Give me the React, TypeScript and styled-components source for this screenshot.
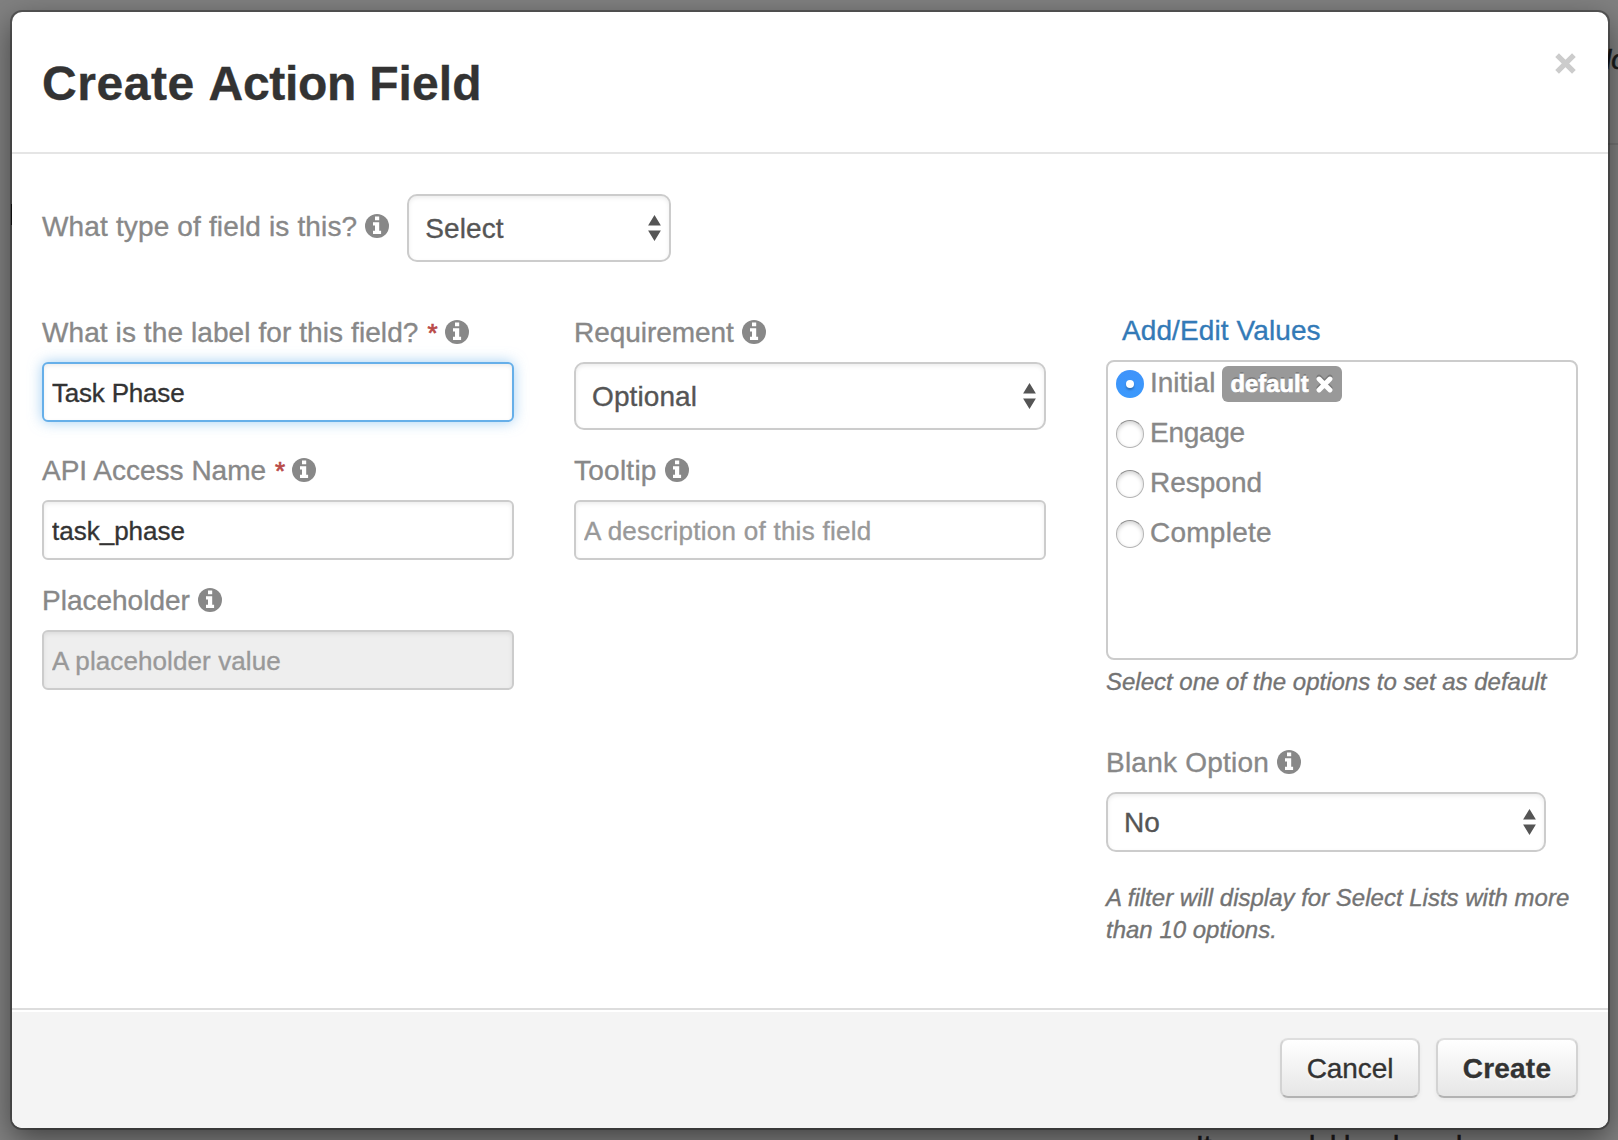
import React from 'react';
import styled, { createGlobalStyle, css } from 'styled-components';

const Global = createGlobalStyle`
  *, *::before, *::after { box-sizing: border-box; }
  html, body, #root { height: 100%; }
  body {
    margin: 0;
    overflow: hidden;
    font-family: "Liberation Sans", Arial, sans-serif;
    font-size: 28px;
    line-height: 40px;
    color: #333;
    -webkit-text-stroke: 0.35px currentColor;
  }
`;

const Backdrop = styled.div`
  position: relative;
  width: 1618px;
  height: 1140px;
  padding: 12px 10px 12px 12px;
  background: #808080;
  overflow: hidden;
`;

const Behind = styled.span<{ $x: number; $y: number; $italic?: boolean }>`
  position: absolute;
  left: ${p => p.$x}px;
  top: ${p => p.$y}px;
  font-size: 28px;
  line-height: 32px;
  white-space: pre;
  color: #1a1a1a;
  font-style: ${p => (p.$italic ? 'italic' : 'normal')};
  -webkit-text-stroke: 0.6px currentColor;
`;

const BehindRule = styled.div`
  position: absolute;
  right: 0;
  top: 143px;
  width: 10px;
  height: 2px;
  background: #747474;
`;

const BehindMark = styled.div`
  position: absolute;
  left: 11px;
  top: 204px;
  width: 4px;
  height: 21px;
  background: #1c1c1c;
`;

const Modal = styled.div`
  position: relative;
  height: 1116px;
  display: flex;
  flex-direction: column;
  background: #fff;
  border-radius: 10px;
  box-shadow: 0 0 0 2px rgba(0, 0, 0, 0.3), 0 10px 30px rgba(0, 0, 0, 0.5);
`;

const Header = styled.header`
  height: 142px;
  padding: 42px 32px 0 30px;
  display: flex;
  justify-content: space-between;
  border-bottom: 2px solid #e5e5e5;
`;

const Title = styled.h1`
  margin: 0;
  font-size: 48px;
  line-height: 60px;
  font-weight: 700;
`;

const Word = styled.span<{ $ls: number }>`
  letter-spacing: ${p => p.$ls}px;
`;

const Close = styled.button`
  width: 21px;
  height: 21px;
  margin-top: -1px;
  padding: 0;
  border: 0;
  background: none;
  display: block;
  svg { display: block; }
`;

const Body = styled.main`
  flex: 1;
  padding: 40px 30px 0;
`;

const TypeRow = styled.div`
  display: flex;
  gap: 18px;
  height: 118px;
`;

const Columns = styled.div`
  display: grid;
  grid-template-columns: repeat(3, 472px);
  column-gap: 60px;
`;

const Column = styled.div`
  display: flex;
  flex-direction: column;
  align-items: stretch;
`;

const Label = styled.label<{ $ls?: number }>`
  display: flex;
  align-items: center;
  height: 40px;
  padding-top: 2px;
  color: #888;
  white-space: pre;
  letter-spacing: ${p => p.$ls ?? 0}px;
  svg { margin: -2px 0 0 8px; flex: none; }
`;

const TypeLabel = styled(Label)`
  margin-top: 12px;
`;

const Required = styled.span`
  width: 9px;
  color: #b94a48;
  margin-left: 9px;
  letter-spacing: 0;
  font-size: 26px;
  -webkit-text-stroke: 0.7px currentColor;
`;

const Field = styled.div<{ $gap?: number }>`
  margin-bottom: ${p => p.$gap ?? 20}px;
`;

const control = css`
  width: 100%;
  border: 2px solid #ccc;
  background: #fff;
  box-shadow: inset 0 2px 4px rgba(0, 0, 0, 0.075);
`;

const Input = styled.input<{ $focused?: boolean; $ls?: number }>`
  ${control}
  display: block;
  height: 60px;
  margin-top: 10px;
  padding: 2px 8px 0;
  border-radius: 6px;
  font: 26px/40px "Liberation Sans", Arial, sans-serif;
  letter-spacing: ${p => p.$ls ?? 0}px;
  color: #333;
  outline: none;
  ${p => p.$focused && css`
    border-color: #66afe9;
    box-shadow: inset 0 2px 4px rgba(0, 0, 0, 0.075), 0 0 14px rgba(102, 175, 233, 0.6);
  `}
  &::placeholder { color: #999; opacity: 1; }
  &:disabled { background: #eee; }
`;

const SelectBox = styled.div<{ $w?: number; $h?: number; $mt?: number }>`
  ${control}
  width: ${p => p.$w ?? 472}px;
  height: ${p => p.$h ?? 68}px;
  margin-top: ${p => p.$mt ?? 0}px;
  padding: 2px 7px 0 16px;
  display: flex;
  align-items: center;
  justify-content: space-between;
  border-radius: 10px;
  color: #555;
  letter-spacing: 0.1px;
  svg { margin-top: -2px; }
`;

const Link = styled.a`
  height: 38px;
  padding-left: 16px;
  line-height: 38px;
  letter-spacing: 0.1px;
  color: #337ab7;
`;

const Options = styled.div`
  height: 300px;
  margin-top: 10px;
  padding: 0 8px;
  border: 2px solid #ccc;
  border-radius: 8px;
`;

const Option = styled.label<{ $ls?: number }>`
  height: 50px;
  display: flex;
  align-items: flex-start;
  color: #888;
  line-height: 41px;
  letter-spacing: ${p => p.$ls ?? 0}px;
`;

const Radio = styled.span<{ $on?: boolean }>`
  width: 28px;
  height: 28px;
  margin: 8px 6px 0 0;
  display: flex;
  align-items: center;
  justify-content: center;
  border-radius: 50%;
  border: 1px solid #b4b4b4;
  border-top-color: #8e8e8e;
  background: #fff;
  box-shadow: inset 0 2px 4px rgba(0, 0, 0, 0.18);
  ${p => p.$on && css`
    border: 0;
    background: linear-gradient(#3f93fa, #3b99fc);
    box-shadow: none;
    &::after {
      content: '';
      width: 8px;
      height: 8px;
      border-radius: 50%;
      background: #fff;
      box-shadow: 0 2px 2px rgba(0, 0, 0, 0.25);
    }
  `}
`;

const Badge = styled.span`
  width: 120px;
  height: 36px;
  margin: 4px 0 0 7px;
  padding: 0 9px 0 8px;
  display: flex;
  align-items: center;
  justify-content: space-between;
  border-radius: 6px;
  background: #999;
  color: #fff;
  font-size: 23.7px;
  line-height: 36px;
  font-weight: 700;
  letter-spacing: 0.1px;
  -webkit-text-stroke: 0.7px currentColor;
  text-shadow: 0 -2px 0 rgba(0, 0, 0, 0.2);
  svg { filter: drop-shadow(0 -2px 0 rgba(0, 0, 0, 0.2)); }
`;

const Help = styled.p<{ $mt: number; $mb?: number }>`
  margin: ${p => p.$mt}px -10px ${p => p.$mb ?? 0}px 0;
  font-size: 24px;
  line-height: 32px;
  font-style: italic;
  color: #737373;
  white-space: pre-line;
`;

const Footer = styled.footer`
  height: 120px;
  padding: 28px 30px 0;
  display: flex;
  justify-content: flex-end;
  gap: 16px;
  background: #f4f4f4;
  border-top: 2px solid #ddd;
  box-shadow: inset 0 2px 0 #fff;
  border-radius: 0 0 10px 10px;
`;

const Button = styled.button<{ $w: number; $bold?: boolean }>`
  width: ${p => p.$w}px;
  height: 60px;
  padding: 1px 0 0;
  border: 2px solid;
  border-color: #dedede #d3d3d3 #b3b3b3;
  border-radius: 8px;
  background: linear-gradient(#fff, #e6e6e6) padding-box;
  box-shadow: inset 0 2px 0 rgba(255, 255, 255, 0.2), 0 2px 4px rgba(0, 0, 0, 0.05);
  font: ${p => (p.$bold ? 700 : 400)} 28px/40px "Liberation Sans", Arial, sans-serif;
  letter-spacing: ${p => (p.$bold ? 0.2 : -0.1)}px;
  color: #333;
  text-shadow: 0 2px 2px rgba(255, 255, 255, 0.75);
`;

const InfoIcon = () => (
  <svg width="24" height="24" viewBox="0 0 24 24" aria-hidden>
    <circle cx="12" cy="12" r="12" fill="#888" />
    <path fill="#fff" d="M10 2.4h4.2v3.8H10zM8 8.2h6.2v8.6h1.9V20H8v-3.2h2v-5.4H8z" />
  </svg>
);

const Cross = ({ size, color, round }: { size: number; color: string; round?: boolean }) => (
  <svg width={size} height={size} viewBox="0 0 20 20" aria-hidden>
    <path
      d={round ? 'M3.6 3.6 16.4 16.4M16.4 3.6 3.6 16.4' : 'M2 2 18 18M18 2 2 18'}
      stroke={color}
      strokeWidth={round ? 5.8 : 5}
      strokeLinecap={round ? 'round' : 'butt'}
      fill="none"
    />
  </svg>
);

const Carets = () => (
  <svg width="14" height="26" viewBox="0 0 14 26" aria-hidden>
    <path fill="#555" d="M6.5 0 12.9 10.6H.1zM6.5 26 .1 15.4h12.8z" />
  </svg>
);

const belowAscenders = [1309, 1330, 1344, 1393, 1456];

export default function App() {
  return (
    <>
      <Global />
      <Backdrop>
        <Behind $x={1605} $y={44} $italic>lo</Behind>
        <BehindRule />
        <BehindMark />
        <Behind $x={1196} $y={1130}>It</Behind>
        {belowAscenders.map(x => <Behind key={x} $x={x} $y={1130}>l</Behind>)}
        <Modal role="dialog">
          <Header>
            <Title>
              <Word $ls={0.55}>Create </Word>
              <Word $ls={-0.3}>Action </Word>
              <Word $ls={0.1}>Field</Word>
            </Title>
            <Close aria-label="Close"><Cross size={21} color="#ccc" /></Close>
          </Header>
          <Body>
            <TypeRow>
              <TypeLabel $ls={0.15}>What type of field is this?<InfoIcon /></TypeLabel>
              <SelectBox $w={264}>Select<Carets /></SelectBox>
            </TypeRow>
            <Columns>
              <Column>
                <Field $gap={28}>
                  <Label $ls={0.09}>What is the label for this field?<Required>*</Required><InfoIcon /></Label>
                  <Input $focused $ls={-0.2} defaultValue="Task Phase" />
                </Field>
                <Field>
                  <Label>API Access Name<Required>*</Required><InfoIcon /></Label>
                  <Input defaultValue="task_phase" />
                </Field>
                <Field>
                  <Label>Placeholder<InfoIcon /></Label>
                  <Input disabled $ls={0.1} placeholder="A placeholder value" />
                </Field>
              </Column>
              <Column>
                <Field>
                  <Label $ls={-0.05}>Requirement<InfoIcon /></Label>
                  <SelectBox $mt={10}>Optional<Carets /></SelectBox>
                </Field>
                <Field>
                  <Label $ls={0.25}>Tooltip<InfoIcon /></Label>
                  <Input $ls={0.26} placeholder="A description of this field" />
                </Field>
              </Column>
              <Column>
                <Link>Add/Edit Values</Link>
                <Options>
                  <Option><Radio $on />Initial<Badge>default<Cross size={17} color="#fff" round /></Badge></Option>
                  <Option $ls={-0.3}><Radio />Engage</Option>
                  <Option><Radio />Respond</Option>
                  <Option $ls={0.25}><Radio />Complete</Option>
                </Options>
                <Help $mt={6} $mb={44}>Select one of the options to set as default</Help>
                <Label $ls={0.23}>Blank Option<InfoIcon /></Label>
                <SelectBox $w={440} $h={60} $mt={10}>No<Carets /></SelectBox>
                <Help $mt={30}>{'A filter will display for Select Lists with more\nthan 10 options.'}</Help>
              </Column>
            </Columns>
          </Body>
          <Footer>
            <Button $w={140}>Cancel</Button>
            <Button $w={142} $bold>Create</Button>
          </Footer>
        </Modal>
      </Backdrop>
    </>
  );
}
